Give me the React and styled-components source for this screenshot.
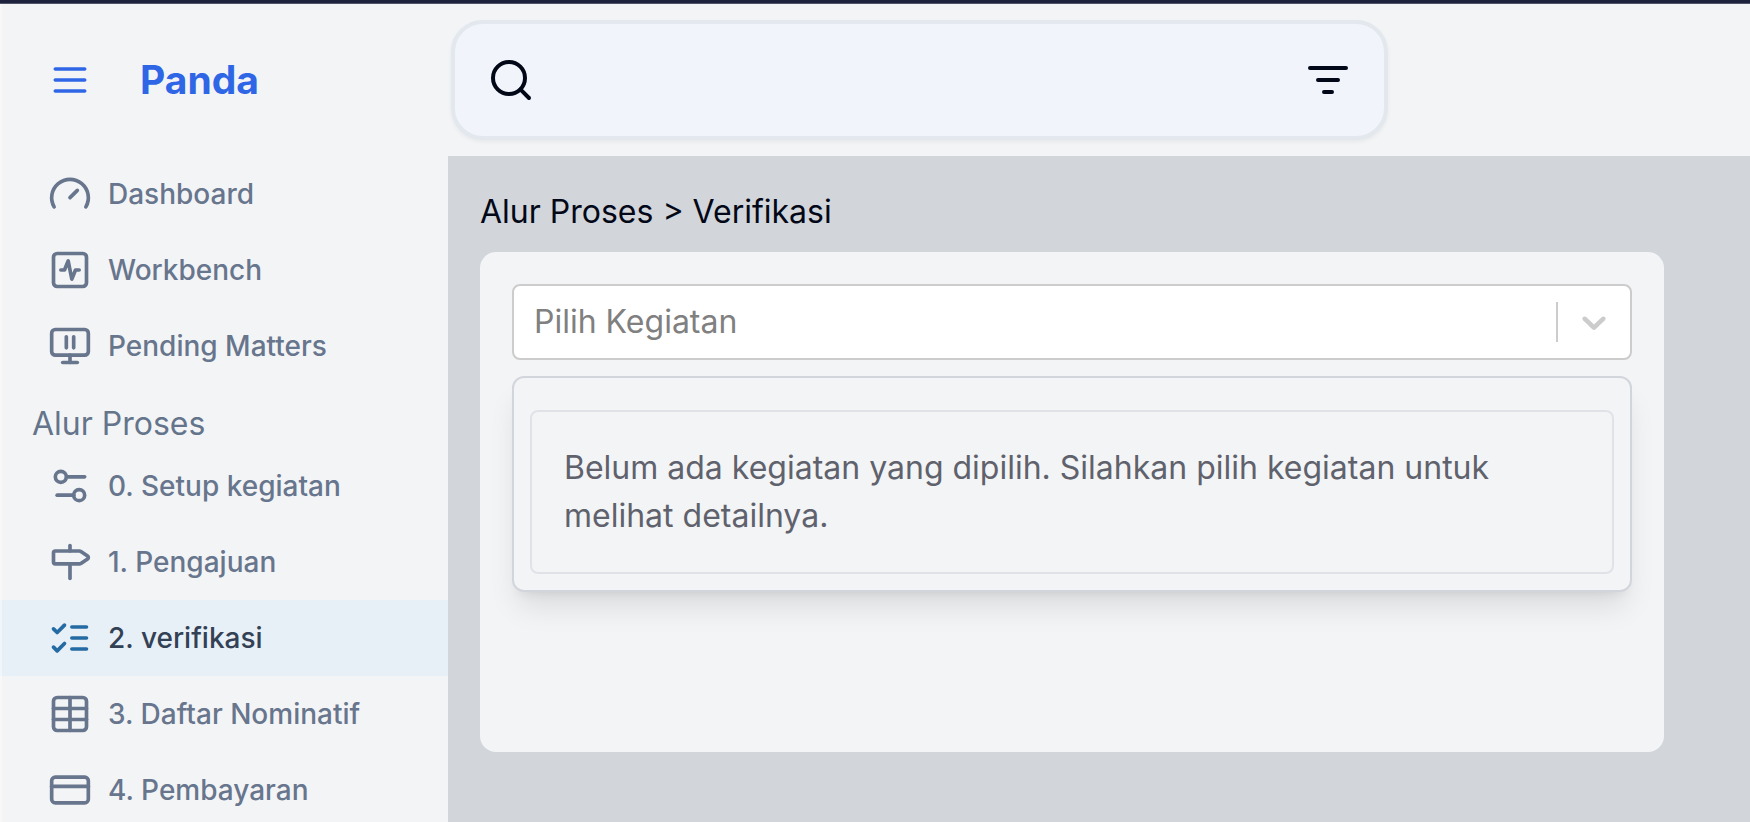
import React from "react";
import styled, { createGlobalStyle } from "styled-components";

const GlobalStyle = createGlobalStyle`
  *, *::before, *::after { box-sizing: border-box; }
  body {
    margin: 0;
    background: #f3f4f6;
    color: #020817;
    font-family: Inter, "Liberation Sans", sans-serif;
    font-size: 32px;
    line-height: 48px;
  }
`;

const Page = styled.div`
  display: flex;
  flex-direction: column;
  height: 100vh;
`;

const TopStrip = styled.div`
  flex: none;
  height: 4px;
  background: #1e223d;
  border-bottom: 1px solid #50556a;
`;

const Body = styled.div`
  flex: 1;
  display: flex;
  min-height: 0;
`;

const Sidebar = styled.aside`
  position: relative;
  flex: none;
  display: flex;
  flex-direction: column;
  width: 448px;

  /* Light edge drawn over the rows */
  &::after {
    content: "";
    position: absolute;
    inset: 0 auto 0 0;
    width: 2px;
    background: rgba(255, 255, 255, 0.4);
  }
`;

const Brand = styled.div`
  flex: none;
  display: flex;
  align-items: center;
  gap: 48px;
  height: 152px;
  padding-left: 48px;
  color: #2f66e6;
`;

const IconButton = styled.button`
  display: flex;
  padding: 0;
  border: 0;
  background: none;
  color: inherit;
  cursor: pointer;
`;

const BrandName = styled.a`
  color: inherit;
  font-size: 39px;
  font-weight: 700;
  text-decoration: none;
`;

const Nav = styled.nav`
  flex: 1;
  min-height: 0;
  overflow-y: auto;
  scrollbar-width: none;
`;

const NavList = styled.ul`
  margin: 0;
  padding: 0;
  list-style: none;
`;

const NavHeading = styled.h2`
  margin: 16px 0 0;
  padding-left: 32px;
  color: #64748b;
  font-size: 32px;
  font-weight: 400;
`;

const NavLink = styled.a`
  display: flex;
  align-items: center;
  gap: 16px;
  height: 76px;
  padding-left: 48px;
  background: ${(p) => (p.$active ? "#e8f0f7" : "transparent")};
  color: ${(p) => (p.$active ? "#334155" : "#67758d")};
  font-size: 28px;
  font-weight: 500;
  text-decoration: none;

  svg {
    color: ${(p) => (p.$active ? "#246ba3" : "inherit")};
  }
`;

const Content = styled.div`
  flex: 1;
  display: flex;
  flex-direction: column;
  min-width: 0;
`;

const Header = styled.header`
  flex: none;
  padding: 16px 0;
`;

const SearchBox = styled.form`
  display: flex;
  align-items: center;
  gap: 16px;
  width: 72%;
  height: 120px;
  margin-left: 3px;
  padding: 0 32px;
  border: 4px solid #e2e8ee;
  border-radius: 32px;
  background: #f1f5fb;
  box-shadow: 0 2px 4px rgba(0, 0, 0, 0.05);
`;

const SearchInput = styled.input`
  flex: 1;
  min-width: 0;
  border: 0;
  outline: 0;
  background: transparent;
  color: inherit;
  font: inherit;
`;

const Main = styled.main`
  flex: 1;
  min-height: 0;
  overflow-y: auto;
  padding: 32px 86px 32px 32px;
  background: #d2d5da;
`;

const Breadcrumb = styled.nav`
  margin-bottom: 16px;

  a {
    color: inherit;
    text-decoration: none;
  }
`;

const Card = styled.section`
  min-height: 500px;
  padding: 32px;
  border-radius: 16px;
  background: #f3f4f6;
`;

const SelectField = styled.div`
  display: grid;
  grid-template: "field" 76px / 1fr;
  align-items: center;
`;

const Select = styled.select`
  grid-area: field;
  appearance: none;
  width: 100%;
  height: 100%;
  padding: 0 88px 0 20px;
  border: 2px solid #cccccc;
  border-radius: 8px;
  background: #ffffff;
  color: #808080;
  font: inherit;
`;

const SelectIndicator = styled.span`
  grid-area: field;
  justify-self: end;
  display: flex;
  padding: 0 16px;
  margin-right: 2px;
  border-left: 2px solid #cccccc;
  color: #cccccc;
  pointer-events: none;
`;

const DetailPanel = styled.div`
  margin-top: 16px;
  padding: 32px 16px 16px;
  border: 2px solid #d2d5dc;
  border-radius: 12px;
  background: #f3f4f6;
  box-shadow:
    0 20px 30px -6px rgba(0, 0, 0, 0.1),
    0 8px 12px -8px rgba(0, 0, 0, 0.1);
`;

const EmptyNote = styled.p`
  margin: 0;
  padding: 32px;
  border: 2px solid #e0e2e8;
  border-radius: 8px;
  color: #5f626c;
`;

function Icon({ size = 44, children }) {
  return (
    <svg
      width={size}
      height={size}
      viewBox="0 0 24 24"
      fill="none"
      stroke="currentColor"
      strokeWidth="2"
      strokeLinecap="round"
      strokeLinejoin="round"
      aria-hidden="true"
    >
      {children}
    </svg>
  );
}

const icons = {
  gauge: (
    <>
      <path d="m12 14 4-4" />
      <path d="M3.34 19a10 10 0 1 1 17.32 0" />
    </>
  ),
  activity: (
    <>
      <rect width="18" height="18" x="3" y="3" rx="2" />
      <path d="M17 12h-2l-2 5-2-10-2 5H7" />
    </>
  ),
  monitor: (
    <>
      <path d="M10 13V7" />
      <path d="M14 13V7" />
      <rect width="20" height="14" x="2" y="3" rx="2" />
      <path d="M12 17v4" />
      <path d="M8 21h8" />
    </>
  ),
  sliders: (
    <>
      <path d="M20 7h-9" />
      <path d="M14 17H5" />
      <circle cx="17" cy="17" r="3" />
      <circle cx="7" cy="7" r="3" />
    </>
  ),
  signpost: (
    <>
      <path d="M12 13v8" />
      <path d="M12 3v3" />
      <path d="M4 6a1 1 0 0 0-1 1v5a1 1 0 0 0 1 1h13a2 2 0 0 0 1.152-.365l3.424-2.317a1 1 0 0 0 0-1.635l-3.424-2.318A2 2 0 0 0 17 6z" />
    </>
  ),
  checks: (
    <>
      <path d="m3 17 2 2 4-4" />
      <path d="m3 7 2 2 4-4" />
      <path d="M13 6h8" />
      <path d="M13 12h8" />
      <path d="M13 18h8" />
    </>
  ),
  table: (
    <>
      <path d="M12 3v18" />
      <rect width="18" height="18" x="3" y="3" rx="2" />
      <path d="M3 9h18" />
      <path d="M3 15h18" />
    </>
  ),
  card: (
    <>
      <rect width="20" height="14" x="2" y="5" rx="2" />
      <path d="M2 10h20" />
    </>
  ),
};

const mainLinks = [
  { label: "Dashboard", icon: "gauge" },
  { label: "Workbench", icon: "activity" },
  { label: "Pending Matters", icon: "monitor" },
];

const processLinks = [
  { label: "0. Setup kegiatan", icon: "sliders" },
  { label: "1. Pengajuan", icon: "signpost" },
  { label: "2. verifikasi", icon: "checks", active: true },
  { label: "3. Daftar Nominatif", icon: "table" },
  { label: "4. Pembayaran", icon: "card" },
];

function NavItems({ items }) {
  return (
    <NavList>
      {items.map(({ label, icon, active }) => (
        <li key={label}>
          <NavLink href="#" $active={active} aria-current={active ? "page" : undefined}>
            <Icon>{icons[icon]}</Icon>
            {label}
          </NavLink>
        </li>
      ))}
    </NavList>
  );
}

export default function App() {
  return (
    <Page>
      <GlobalStyle />
      <TopStrip />
      <Body>
        <Sidebar>
          <Brand>
            <IconButton type="button" aria-label="Menu">
              <Icon>
                <path d="M4 6h16M4 12h16M4 18h16" />
              </Icon>
            </IconButton>
            <BrandName href="#">Panda</BrandName>
          </Brand>
          <Nav aria-label="Menu utama">
            <NavItems items={mainLinks} />
            <NavHeading>Alur Proses</NavHeading>
            <NavItems items={processLinks} />
          </Nav>
        </Sidebar>
        <Content>
          <Header>
            <SearchBox role="search" onSubmit={(e) => e.preventDefault()}>
              <IconButton type="submit" aria-label="Cari">
                <Icon size={48}>
                  <circle cx="11" cy="11" r="8" />
                  <path d="m21 21-4.3-4.3" />
                </Icon>
              </IconButton>
              <SearchInput type="text" aria-label="Kata kunci" />
              <IconButton type="button" aria-label="Filter">
                <Icon size={48}>
                  <path d="M3 6h18M7 12h10M10 18h4" />
                </Icon>
              </IconButton>
            </SearchBox>
          </Header>
          <Main>
            <Breadcrumb aria-label="Breadcrumb">
              <a href="#">Alur Proses</a> &gt; <a href="#">Verifikasi</a>
            </Breadcrumb>
            <Card>
              <SelectField>
                <Select aria-label="Pilih Kegiatan" defaultValue="">
                  <option value="">Pilih Kegiatan</option>
                </Select>
                <SelectIndicator>
                  <svg width="40" height="40" viewBox="0 0 20 20" fill="currentColor" aria-hidden="true">
                    <path d="M4.516 7.548c0.436-0.446 1.043-0.481 1.576 0l3.908 3.747 3.908-3.747c0.533-0.481 1.141-0.446 1.574 0 0.436 0.445 0.408 1.197 0 1.615-0.406 0.418-4.695 4.502-4.695 4.502-0.217 0.223-0.502 0.335-0.787 0.335s-0.57-0.112-0.789-0.335c0 0-4.287-4.084-4.695-4.502s-0.436-1.17 0-1.615z" />
                  </svg>
                </SelectIndicator>
              </SelectField>
              <DetailPanel>
                <EmptyNote>
                  Belum ada kegiatan yang dipilih. Silahkan pilih kegiatan untuk melihat detailnya.
                </EmptyNote>
              </DetailPanel>
            </Card>
          </Main>
        </Content>
      </Body>
    </Page>
  );
}
